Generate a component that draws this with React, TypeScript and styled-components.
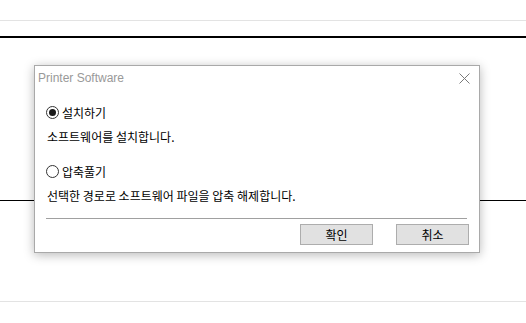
import styled, { createGlobalStyle } from 'styled-components';

const GlobalStyle = createGlobalStyle`
  html, body {
    margin: 0;
    padding: 0;
    background: #ffffff;
  }
  body {
    font-family: "Noto Sans CJK KR", "Noto Sans", sans-serif;
  }
`;

const Page = styled.div`
  position: relative;
  width: 526px;
  height: 323px;
  overflow: hidden;
  background: #fff;
`;

const TopBar = styled.div`
  height: 20px;
  border-bottom: 1px solid #e3e3e3;
`;

const Rule = styled.div<{ $thick?: boolean; $gap: number; $color?: string }>`
  margin-top: ${({ $gap }) => $gap}px;
  height: ${({ $thick }) => ($thick ? 2 : 1)}px;
  background: ${({ $color }) => $color ?? '#000'};
`;

const Dialog = styled.div`
  position: absolute;
  left: 34px;
  top: 65px;
  width: 444px;
  height: 186px;
  background: #fff;
  border: 1px solid #a9a9a9;
  box-shadow: 0 2px 10px rgba(0, 0, 0, 0.28);
  display: flex;
  flex-direction: column;
`;

const TitleBar = styled.div`
  height: 24px;
  display: flex;
  align-items: center;
  justify-content: space-between;
  padding: 0 9px 0 3px;
`;

const Title = styled.span`
  font-family: "Liberation Sans", "Noto Sans", sans-serif;
  font-size: 12px;
  color: #999;
  margin-top: -1px;
`;

const CloseIcon = styled.svg`
  display: block;
  margin-top: 1px;
`;

const Body = styled.div`
  padding: 14px 12px 0 11px;
  display: flex;
  flex-direction: column;
`;

const Option = styled.label<{ $gap: number }>`
  display: flex;
  align-items: center;
  height: 16px;
  margin-top: ${({ $gap }) => $gap}px;
  font-size: 12px;
  color: #000;
`;

const Radio = styled.span<{ $checked?: boolean }>`
  box-sizing: border-box;
  width: 13px;
  height: 13px;
  border: 1px solid #333;
  border-radius: 50%;
  margin-right: 3px;
  display: flex;
  align-items: center;
  justify-content: center;

  &::after {
    content: '';
    display: ${({ $checked }) => ($checked ? 'block' : 'none')};
    width: 7px;
    height: 7px;
    border-radius: 50%;
    background: #1a1a1a;
  }
`;

const Description = styled.div`
  height: 16px;
  line-height: 16px;
  margin-top: 9px;
  padding-left: 1px;
  font-size: 12px;
  color: #000;
`;

const Separator = styled.div`
  margin-top: 14px;
  height: 1px;
  background: #a0a0a0;
`;

const Buttons = styled.div`
  display: flex;
  justify-content: flex-end;
  gap: 23px;
  margin-top: 5px;
  margin-right: -2px;
`;

const Button = styled.button`
  box-sizing: border-box;
  width: 73px;
  height: 21px;
  background: #e1e1e1;
  border: 1px solid #adadad;
  font-family: "Noto Sans CJK KR", sans-serif;
  font-size: 12px;
  color: #000;
  padding: 0;
  line-height: 19px;
`;

export default function App() {
  return (
    <>
      <GlobalStyle />
      <Page>
        <TopBar />
        <Rule $thick $gap={15} />
        <Rule $gap={162} />
        <Rule $gap={100} $color="#e3e3e3" />

        <Dialog>
          <TitleBar>
            <Title>Printer Software</Title>
            <CloseIcon width="11" height="11" viewBox="0 0 11 11">
              <path d="M0.5 0.5 L10.5 10.5 M10.5 0.5 L0.5 10.5" stroke="#7a7a7a" strokeWidth="1" fill="none" />
            </CloseIcon>
          </TitleBar>
          <Body>
            <Option $gap={0}>
              <Radio $checked />
              설치하기
            </Option>
            <Description>소프트웨어를 설치합니다.</Description>
            <Option $gap={18}>
              <Radio />
              압축풀기
            </Option>
            <Description>선택한 경로로 소프트웨어 파일을 압축 해제합니다.</Description>
            <Separator />
            <Buttons>
              <Button>확인</Button>
              <Button>취소</Button>
            </Buttons>
          </Body>
        </Dialog>
      </Page>
    </>
  );
}
